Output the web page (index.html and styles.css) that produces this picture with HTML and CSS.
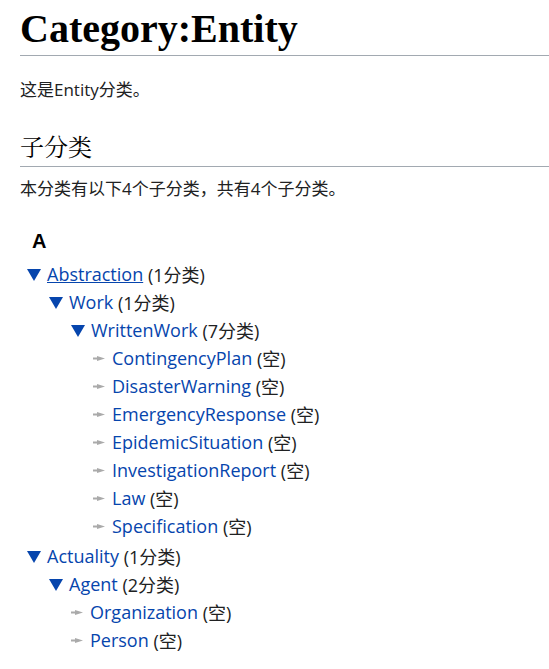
FILE: index.html
```html
<!DOCTYPE html>
<html lang="zh">
<head>
<meta charset="utf-8">
<link rel="stylesheet" href="styles.css">
</head>
<body>
<div class="content">
  <h1 class="title">Category:Entity</h1>
  <p class="para">这是Entity分类。</p>
  <h2 class="section">子分类</h2>
  <p class="para">本分类有以下4个子分类，共有4个子分类。</p>
  <div class="group">
    <h3 class="letter">A</h3>
    <div class="tree">
      <div class="node"><svg class="tog" viewBox="0 0 14 12"><polygon points="0,0 14,0 7,12"/></svg><a class="link under" href="#">Abstraction</a>&nbsp;<span class="count">(1分类)</span></div>
      <div class="children">
        <div class="node"><svg class="tog" viewBox="0 0 14 12"><polygon points="0,0 14,0 7,12"/></svg><a class="link" href="#">Work</a>&nbsp;<span class="count">(1分类)</span></div>
        <div class="children">
          <div class="node"><svg class="tog" viewBox="0 0 14 12"><polygon points="0,0 14,0 7,12"/></svg><a class="link" href="#">WrittenWork</a>&nbsp;<span class="count">(7分类)</span></div>
          <div class="children">
            <div class="node"><svg class="leaf" viewBox="0 0 12 5"><polygon points="0,1.5 4,1.5 4,0 12,2.5 4,5 4,3.5 0,3.5"/></svg><a class="link" href="#">ContingencyPlan</a>&nbsp;<span class="count">(空)</span></div>
            <div class="node"><svg class="leaf" viewBox="0 0 12 5"><polygon points="0,1.5 4,1.5 4,0 12,2.5 4,5 4,3.5 0,3.5"/></svg><a class="link" href="#">DisasterWarning</a>&nbsp;<span class="count">(空)</span></div>
            <div class="node"><svg class="leaf" viewBox="0 0 12 5"><polygon points="0,1.5 4,1.5 4,0 12,2.5 4,5 4,3.5 0,3.5"/></svg><a class="link" href="#">EmergencyResponse</a>&nbsp;<span class="count">(空)</span></div>
            <div class="node"><svg class="leaf" viewBox="0 0 12 5"><polygon points="0,1.5 4,1.5 4,0 12,2.5 4,5 4,3.5 0,3.5"/></svg><a class="link" href="#">EpidemicSituation</a>&nbsp;<span class="count">(空)</span></div>
            <div class="node"><svg class="leaf" viewBox="0 0 12 5"><polygon points="0,1.5 4,1.5 4,0 12,2.5 4,5 4,3.5 0,3.5"/></svg><a class="link" href="#">InvestigationReport</a>&nbsp;<span class="count">(空)</span></div>
            <div class="node"><svg class="leaf" viewBox="0 0 12 5"><polygon points="0,1.5 4,1.5 4,0 12,2.5 4,5 4,3.5 0,3.5"/></svg><a class="link" href="#">Law</a>&nbsp;<span class="count">(空)</span></div>
            <div class="node"><svg class="leaf" viewBox="0 0 12 5"><polygon points="0,1.5 4,1.5 4,0 12,2.5 4,5 4,3.5 0,3.5"/></svg><a class="link" href="#">Specification</a>&nbsp;<span class="count">(空)</span></div>
          </div>
        </div>
      </div>
    </div>
    <div class="tree">
      <div class="node"><svg class="tog" viewBox="0 0 14 12"><polygon points="0,0 14,0 7,12"/></svg><a class="link" href="#">Actuality</a>&nbsp;<span class="count">(1分类)</span></div>
      <div class="children">
        <div class="node"><svg class="tog" viewBox="0 0 14 12"><polygon points="0,0 14,0 7,12"/></svg><a class="link" href="#">Agent</a>&nbsp;<span class="count">(2分类)</span></div>
        <div class="children">
          <div class="node"><svg class="leaf" viewBox="0 0 12 5"><polygon points="0,1.5 4,1.5 4,0 12,2.5 4,5 4,3.5 0,3.5"/></svg><a class="link" href="#">Organization</a>&nbsp;<span class="count">(空)</span></div>
          <div class="node"><svg class="leaf" viewBox="0 0 12 5"><polygon points="0,1.5 4,1.5 4,0 12,2.5 4,5 4,3.5 0,3.5"/></svg><a class="link" href="#">Person</a>&nbsp;<span class="count">(空)</span></div>
        </div>
      </div>
    </div>
  </div>
</div>
</body>
</html>
```
FILE: styles.css
```css
html, body {
  margin: 0;
  padding: 0;
  background: #fff;
}
body {
  font-family: "Open Sans", "Noto Sans CJK SC", sans-serif;
  font-size: 17px;
  color: #202122;
}
.content {
  padding: 0 0 0 20px;
}
.title {
  font-family: "Liberation Serif", "Noto Sans CJK SC", serif;
  font-weight: bold;
  font-size: 40px;
  line-height: 1.2;
  margin: 5px 0 0;
  padding: 0 0 2px;
  border-bottom: 1px solid #a2a9b1;
  color: #000;
}
.para {
  margin: 22px 0 0;
  line-height: 24px;
}
.section {
  font-family: "Liberation Serif", "Noto Serif CJK SC", "Noto Sans CJK SC", serif;
  font-weight: normal;
  font-size: 24px;
  line-height: 1.3;
  margin: 31px 0 0;
  padding-bottom: 2px;
  border-bottom: 1px solid #a2a9b1;
  color: #000;
}
.section + .para {
  margin-top: 10px;
}
.group {
  margin-top: 27px;
}
.letter {
  margin: 0 0 6px 12px;
  font-family: "Liberation Sans", "Noto Sans CJK SC", sans-serif;
  font-size: 20px;
  font-weight: bold;
  line-height: 26px;
  color: #000;
}
.tree {
  margin-left: 7px;
  font-size: 18px;
}
.tree + .tree {
  margin-top: 2px;
}
.children {
  margin-left: 22px;
}
.node {
  display: flex;
  align-items: center;
  height: 28px;
  white-space: nowrap;
}
.tog {
  width: 14px;
  height: 12px;
  fill: #0645ad;
  margin: 1px 6px 0 0;
  flex: none;
}
.leaf {
  width: 12px;
  height: 5px;
  fill: #aaaaaa;
  margin: 1px 7px 0 0;
  flex: none;
}
.link {
  color: #0645ad;
  text-decoration: none;
}
.link.under {
  text-decoration: underline;
}
.count {
  color: #202122;
}
```
